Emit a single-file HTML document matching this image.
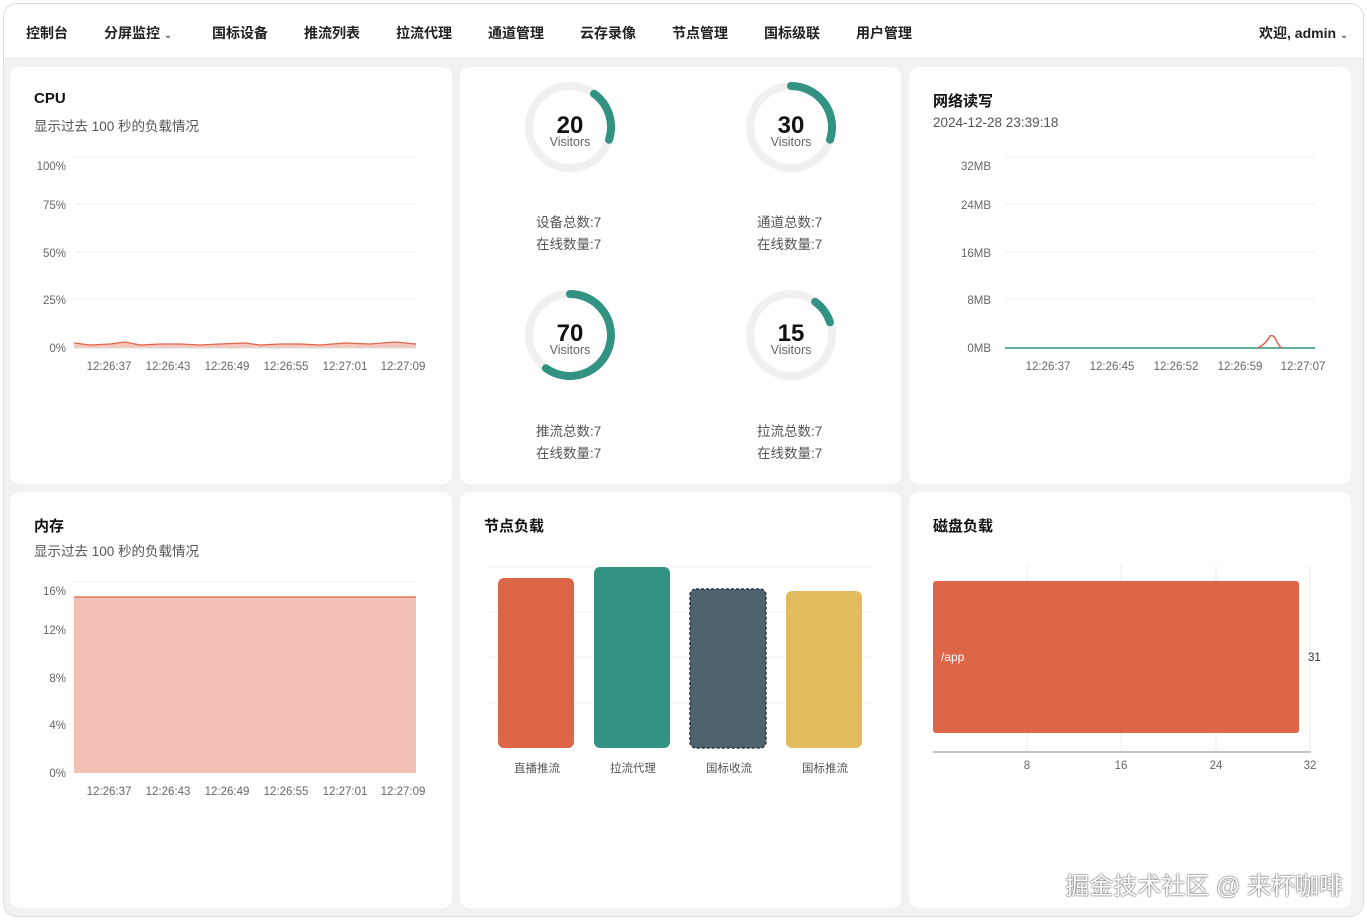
<!DOCTYPE html>
<html><head><meta charset="utf-8"><style>
*{margin:0;padding:0;box-sizing:border-box}
body{width:1367px;height:920px;background:#fff;font-family:"Liberation Sans","Noto Sans CJK SC",sans-serif;position:relative;overflow:hidden;color:#222}
.frame{position:absolute;left:3px;top:3px;width:1361px;height:914px;border:1px solid #ddd;border-radius:14px;background:#f2f2f2;overflow:hidden}
.nav{position:absolute;left:0;top:0;width:100%;height:55px;background:#fff;border-bottom:1px solid #e8e8e8}
.nav span{position:absolute;top:19px;font-size:14px;font-weight:bold;color:#222}
.card{position:absolute;background:#fff;border-radius:10px}
.t{position:absolute;font-size:15px;font-weight:bold;color:#111}
.s{position:absolute;font-size:13.5px;color:#555}
svg{position:absolute;left:0;top:0}
.wm{position:absolute;right:24px;top:866px;font-size:24px;color:#fff;text-shadow:0 0 2px #666,0 0 1px #333}
</style></head><body>
<div class="frame">
<div class="nav">
<span style="left:22px">控制台</span>
<span style="left:100px">分屏监控 <small style="font-weight:normal;font-size:10px">⌄</small></span>
<span style="left:208px">国标设备</span>
<span style="left:300px">推流列表</span>
<span style="left:392px">拉流代理</span>
<span style="left:484px">通道管理</span>
<span style="left:576px">云存录像</span>
<span style="left:668px">节点管理</span>
<span style="left:760px">国标级联</span>
<span style="left:852px">用户管理</span>
<span style="left:1255px">欢迎, admin <small style="font-weight:normal;font-size:10px">⌄</small></span>
</div>
</div>
<div class="card" style="left:10px;top:67px;width:442px;height:417px"></div>
<div class="card" style="left:460px;top:67px;width:441px;height:417px"></div>
<div class="card" style="left:909px;top:67px;width:442px;height:417px"></div>
<div class="card" style="left:10px;top:492px;width:442px;height:416px"></div>
<div class="card" style="left:460px;top:492px;width:441px;height:416px"></div>
<div class="card" style="left:909px;top:492px;width:442px;height:416px"></div>

<div class="t" style="left:34px;top:90px">CPU</div>
<div class="s" style="left:34px;top:115px">显示过去 100 秒的负载情况</div>
<div class="t" style="left:933px;top:90px">网络读写</div>
<div class="s" style="left:933px;top:115px">2024-12-28 23:39:18</div>
<div class="t" style="left:34px;top:515px">内存</div>
<div class="s" style="left:34px;top:540px">显示过去 100 秒的负载情况</div>
<div class="t" style="left:484px;top:515px">节点负载</div>
<div class="t" style="left:933px;top:515px">磁盘负载</div>

<svg width="1367" height="920" font-family="Liberation Sans, Noto Sans CJK SC, sans-serif">
<g stroke="#eee" stroke-width="1">
<line x1="74" y1="157" x2="416" y2="157"/><line x1="74" y1="204" x2="416" y2="204"/><line x1="74" y1="252" x2="416" y2="252"/><line x1="74" y1="299" x2="416" y2="299"/>
<line x1="1005" y1="157" x2="1315" y2="157"/><line x1="1005" y1="204" x2="1315" y2="204"/><line x1="1005" y1="252" x2="1315" y2="252"/><line x1="1005" y1="299" x2="1315" y2="299"/>
<line x1="74" y1="582" x2="416" y2="582"/><line x1="74" y1="629" x2="416" y2="629"/><line x1="74" y1="677" x2="416" y2="677"/><line x1="74" y1="724" x2="416" y2="724"/>
<line x1="488" y1="567" x2="872" y2="567"/><line x1="488" y1="612" x2="872" y2="612"/><line x1="488" y1="657" x2="872" y2="657"/><line x1="488" y1="703" x2="872" y2="703"/>
<line x1="1027" y1="565" x2="1027" y2="752"/><line x1="1121" y1="565" x2="1121" y2="752"/><line x1="1216" y1="565" x2="1216" y2="752"/><line x1="1310" y1="565" x2="1310" y2="752"/>
</g>
<g font-size="11.5" fill="#666" text-anchor="end">
<text x="66" y="170">100%</text><text x="66" y="209">75%</text><text x="66" y="257">50%</text><text x="66" y="304">25%</text><text x="66" y="352">0%</text>
<text x="991" y="170">32MB</text><text x="991" y="209">24MB</text><text x="991" y="257">16MB</text><text x="991" y="304">8MB</text><text x="991" y="352">0MB</text>
<text x="66" y="595">16%</text><text x="66" y="634">12%</text><text x="66" y="682">8%</text><text x="66" y="729">4%</text><text x="66" y="777">0%</text>
</g>
<g font-size="11.5" fill="#666" text-anchor="middle">
<text x="109" y="370">12:26:37</text><text x="168" y="370">12:26:43</text><text x="227" y="370">12:26:49</text><text x="286" y="370">12:26:55</text><text x="345" y="370">12:27:01</text><text x="403" y="370">12:27:09</text>
<text x="109" y="795">12:26:37</text><text x="168" y="795">12:26:43</text><text x="227" y="795">12:26:49</text><text x="286" y="795">12:26:55</text><text x="345" y="795">12:27:01</text><text x="403" y="795">12:27:09</text>
<text x="1048" y="370">12:26:37</text><text x="1112" y="370">12:26:45</text><text x="1176" y="370">12:26:52</text><text x="1240" y="370">12:26:59</text><text x="1303" y="370">12:27:07</text>
<text x="1027" y="769">8</text><text x="1121" y="769">16</text><text x="1216" y="769">24</text><text x="1310" y="769">32</text>
</g>
<!-- cpu -->
<path d="M74 343 L90 345 L110 344 L125 342 L140 345 L160 344 L180 344 L200 345 L220 344 L245 343 L260 345 L280 344 L300 344 L320 345 L345 343 L370 344 L395 342 L416 344 L416 348 L74 348Z" fill="#f4c6bb"/>
<path d="M74 343 L90 345 L110 344 L125 342 L140 345 L160 344 L180 344 L200 345 L220 344 L245 343 L260 345 L280 344 L300 344 L320 345 L345 343 L370 344 L395 342 L416 344" stroke="#e0664a" fill="none" stroke-width="1.2"/>
<line x1="74" y1="348" x2="416" y2="348" stroke="#ddd"/>
<!-- net -->
<line x1="1005" y1="348" x2="1315" y2="348" stroke="#329383" stroke-width="1.5"/>
<path d="M1258 348 Q1266 344 1270 336 Q1274 334 1277 342 L1281 348" stroke="#e0664a" fill="none" stroke-width="1.5"/>
<!-- mem -->
<rect x="74" y="597" width="342" height="176" fill="#f2c0b5"/>
<line x1="74" y1="597" x2="416" y2="597" stroke="#e0664a" stroke-width="1.2"/>
<!-- gauges -->
<g fill="none" stroke-width="8">
<circle cx="570" cy="127" r="41" stroke="#f0f0f0"/><path d="M594.1 93.8 A41 41 0 0 1 609 139.7" stroke="#329383" stroke-linecap="round"/>
<circle cx="791" cy="127" r="41" stroke="#f0f0f0"/><path d="M791 86 A41 41 0 0 1 830 139.7" stroke="#329383" stroke-linecap="round"/>
<circle cx="570" cy="335" r="41" stroke="#f0f0f0"/><path d="M570 294 A41 41 0 1 1 545.9 368.2" stroke="#329383" stroke-linecap="round"/>
<circle cx="791" cy="335" r="41" stroke="#f0f0f0"/><path d="M815.1 301.8 A41 41 0 0 1 830 322.3" stroke="#329383" stroke-linecap="round"/>
</g>
<g text-anchor="middle">
<text x="570" y="133" font-size="24" font-weight="bold" fill="#111">20</text><text x="570" y="146" font-size="12.5" fill="#666">Visitors</text>
<text x="791" y="133" font-size="24" font-weight="bold" fill="#111">30</text><text x="791" y="146" font-size="12.5" fill="#666">Visitors</text>
<text x="570" y="341" font-size="24" font-weight="bold" fill="#111">70</text><text x="570" y="354" font-size="12.5" fill="#666">Visitors</text>
<text x="791" y="341" font-size="24" font-weight="bold" fill="#111">15</text><text x="791" y="354" font-size="12.5" fill="#666">Visitors</text>
</g>
<g font-size="13.5" fill="#555">
<text x="536" y="227">设备总数:7</text><text x="536" y="249">在线数量:7</text>
<text x="757" y="227">通道总数:7</text><text x="757" y="249">在线数量:7</text>
<text x="536" y="436">推流总数:7</text><text x="536" y="458">在线数量:7</text>
<text x="757" y="436">拉流总数:7</text><text x="757" y="458">在线数量:7</text>
</g>
<!-- bars -->
<rect x="498" y="578" width="76" height="170" rx="6" fill="#de6648"/>
<rect x="594" y="567" width="76" height="181" rx="6" fill="#329383"/>
<rect x="690" y="589" width="76" height="159" rx="6" fill="#4f636e" stroke="#2a3a42" stroke-width="1.5" stroke-dasharray="3 2"/>
<rect x="786" y="591" width="76" height="157" rx="6" fill="#e2bb5e"/>
<g font-size="11.5" fill="#555" text-anchor="middle">
<text x="537" y="772">直播推流</text><text x="633" y="772">拉流代理</text><text x="729" y="772">国标收流</text><text x="825" y="772">国标推流</text>
</g>
<!-- disk -->
<rect x="933" y="581" width="366" height="152" rx="3" fill="#de6648"/>
<line x1="933" y1="752" x2="1311" y2="752" stroke="#888"/>
<text x="941" y="661" font-size="12" fill="#fff">/app</text>
<text x="1308" y="661" font-size="11.5" fill="#333">31</text>
</svg>
<div class="wm">掘金技术社区 @ 来杯咖啡</div>
</body></html>
